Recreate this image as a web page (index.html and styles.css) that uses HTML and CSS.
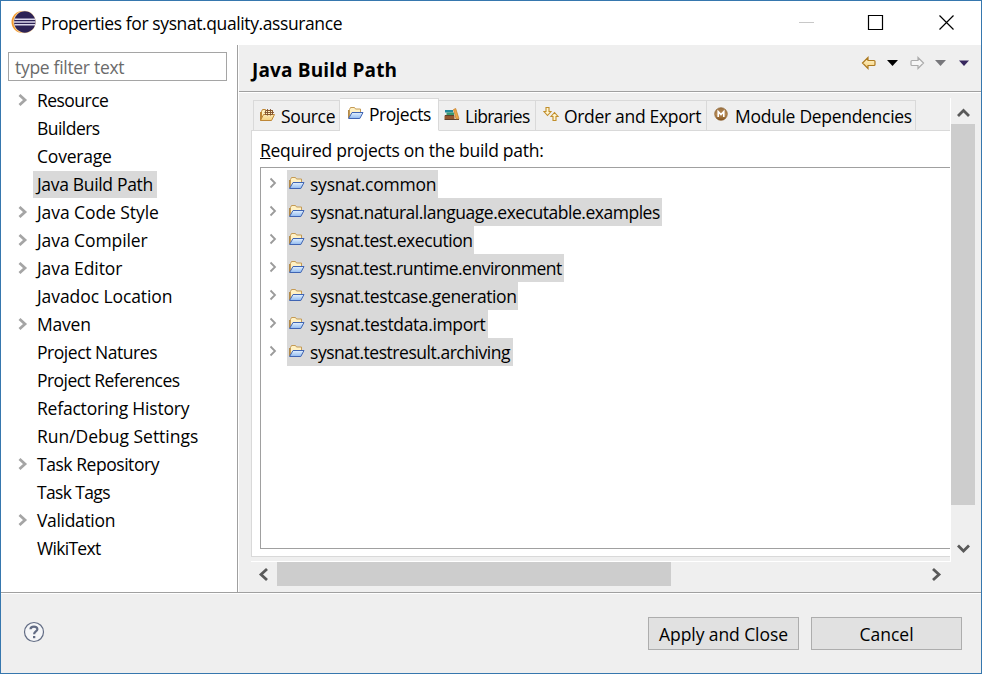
FILE: index.html
```html
<!DOCTYPE html>
<html lang="en">
<head>
<meta charset="utf-8">
<title>Properties for sysnat.quality.assurance</title>
<link rel="stylesheet" href="styles.css">
</head>
<body>
<svg width="0" height="0" class="defs" aria-hidden="true">
  <defs>
    <linearGradient id="gy" x1="0" y1="0" x2="0" y2="1"><stop offset="0" stop-color="#fff6d0"/><stop offset="1" stop-color="#f5cf7c"/></linearGradient>
    <linearGradient id="gb" x1="0" y1="0" x2="0" y2="1"><stop offset="0" stop-color="#e4f2ff"/><stop offset="1" stop-color="#8fb9ef"/></linearGradient>
    <linearGradient id="gm" x1="0" y1="0" x2="0" y2="1"><stop offset="0" stop-color="#9b7243"/><stop offset=".55" stop-color="#b98b55"/><stop offset="1" stop-color="#80501b"/></linearGradient>
    <symbol id="folder" viewBox="0 0 17 14"><path d="M2.500 11.500V3.500l1-2h4l1 1.500h5v3" fill="#fff1c4" stroke="#c49a55"/><path d="M1.500 4v8" stroke="#b28a4b"/><path d="M1.600 12.500 5 6.500h11l-3.200 6z" fill="url(#gb)" stroke="#3f64b3"/></symbol>
    <symbol id="chev" viewBox="0 0 10 14"><path d="M1.500 2 7 7l-5.500 5" fill="none" stroke="currentColor" stroke-width="2.800"/></symbol>
    <symbol id="thin" viewBox="0 0 8 12"><path d="M1.500 1.500 6 6l-4.500 4.500" fill="none" stroke="#9b9b9b" stroke-width="1.800"/></symbol>
    <symbol id="arrow" viewBox="0 0 16 14"><path d="M1.500 7 7 1.500v3h6q1 0 1 1v3q0 1-1 1H7v3z" stroke-width="1.200"/></symbol>
  </defs>
</svg>
<div class="window">
  <header class="titlebar">
    <svg class="logo" viewBox="0 0 25 24"><circle cx="11.500" cy="12" r="11" fill="#f39a2e"/><circle cx="13.500" cy="12" r="11.200" fill="#f8d7a5"/><circle cx="13.800" cy="12" r="10.700" fill="#2d2255"/><path d="M3.500 9.300h20.700M3 12h21.500M3.500 14.700h20.700" stroke="#ddd9ec" stroke-width="1.400"/></svg>
    <h1>Properties for sysnat.quality.assurance</h1>
    <svg class="controls" viewBox="0 0 160 20" width="160" height="20"><path d="M0 10.500h15" stroke="#c8c8c8"/><path d="M69.500 3.500h14v14h-14z" fill="none" stroke="#000" stroke-width="1.200"/><path d="m140.500 3.500 14 14m0-14-14 14" stroke="#000" stroke-width="1.200"/></svg>
  </header>
  <div class="body">
    <nav class="sidebar">
      <div class="filter"><span>type filter text</span></div>
      <ul class="nav">
        <li class="s4"><svg class="chev"><use href="#chev"/></svg><span>Resource</span></li>
        <li class="s4"><span>Builders</span></li>
        <li><span>Coverage</span></li>
        <li class="s3"><span class="selected">Java Build Path</span></li>
        <li class="s0"><svg class="chev"><use href="#chev"/></svg><span>Java Code Style</span></li>
        <li class="s0"><svg class="chev"><use href="#chev"/></svg><span>Java Compiler</span></li>
        <li class="s0"><svg class="chev"><use href="#chev"/></svg><span>Java Editor</span></li>
        <li class="s0"><span>Javadoc Location</span></li>
        <li><svg class="chev"><use href="#chev"/></svg><span>Maven</span></li>
        <li class="s35"><span>Project Natures</span></li>
        <li class="s4"><span>Project References</span></li>
        <li><span>Refactoring History</span></li>
        <li class="s00"><span>Run/Debug Settings</span></li>
        <li class="s35"><svg class="chev"><use href="#chev"/></svg><span>Task Repository</span></li>
        <li class="s5"><span>Task Tags</span></li>
        <li class="s3"><svg class="chev"><use href="#chev"/></svg><span>Validation</span></li>
        <li class="s6"><span>WikiText</span></li>
      </ul>
    </nav>
    <main class="main">
      <div class="heading">
        <h2>Java Build Path</h2>
        <svg width="112" height="14" viewBox="0 0 112 14"><use href="#arrow" width="16" height="14" fill="url(#gy)" stroke="#ad7a20"/><path d="M26 4h11l-5.500 6z" fill="#000"/><use href="#arrow" width="16" height="14" transform="translate(64 0) scale(-1 1)" fill="#f6f6f6" stroke="#ababab"/><path d="M74 4h11l-5.500 6z" fill="#77777b"/><path d="M98 4.500h10l-5 5.500z" fill="#37285e"/></svg>
      </div>
      <div class="scroller">
        <div class="view">
          <div class="tabs">
            <div class="tab t1"><svg width="17" height="15" viewBox="0 0 17 15"><path d="M2.500 12V4.500l1-2h3l1 1h6v3" fill="#fff0bd" stroke="#be8737"/><path d="M1.500 5v8.500L4.500 7.500h11L12.500 13.500h-11" fill="url(#gy)" stroke="#be8737"/><path d="M6.500 3.500h7v4h-7zM8.500 2v6.500m3-6.500v6.500M5.500 5.500h9.500" fill="none" stroke="#80502d" stroke-width=".9"/></svg><span>Source</span></div>
            <div class="tab t2"><svg width="17" height="14"><use href="#folder"/></svg><span>Projects</span></div>
            <div class="tab t3"><svg width="16" height="14" viewBox="0 0 16 14"><path d="M1 3h8v2.500H1z" fill="#23889b"/><path d="M2.500 5.500H10V8H2.500z" fill="#3b9871"/><path d="M.5 8.500h10v3.500H.5z" fill="#95582f"/><path d="M1 8.500h9M.5 12.500h14.500" stroke="#61402b"/><path d="m9.500 2.500 2.200-1L15 11.800h-3z" fill="#eda849" stroke="#c57c25" stroke-width=".7"/></svg><span>Libraries</span></div>
            <div class="tab t4"><svg width="16" height="16" viewBox="0 0 16 16"><path d="M3 1.500h3v4h2L4.500 9.500 1 5.500h2zM10 14.500h3v-4h2l-3.500-4-3.500 4h2z" fill="#fff5d1" stroke="#c18e2b" stroke-width="1.100"/></svg><span>Order and Export</span></div>
            <div class="tab t5"><svg width="14" height="14" viewBox="0 0 14 14"><circle cx="7" cy="7" r="6.300" fill="url(#gm)" stroke="#8b622f" stroke-width=".7"/><path d="M4.200 10V4.500L7 7.500l2.800-3V10" fill="none" stroke="#fff" stroke-width="1.600"/></svg><span>Module Dependencies</span></div>
          </div>
          <div class="panel">
            <div class="label"><span><u>R</u>equired projects on the build path:</span></div>
            <ul class="tree">
              <li><svg class="thin"><use href="#thin"/></svg><div class="item p1"><svg width="17" height="14"><use href="#folder"/></svg><span>sysnat.common</span></div></li>
              <li><svg class="thin"><use href="#thin"/></svg><div class="item p2"><svg width="17" height="14"><use href="#folder"/></svg><span>sysnat.natural.language.executable.examples</span></div></li>
              <li><svg class="thin"><use href="#thin"/></svg><div class="item p3"><svg width="17" height="14"><use href="#folder"/></svg><span>sysnat.test.execution</span></div></li>
              <li><svg class="thin"><use href="#thin"/></svg><div class="item p4"><svg width="17" height="14"><use href="#folder"/></svg><span>sysnat.test.runtime.environment</span></div></li>
              <li><svg class="thin"><use href="#thin"/></svg><div class="item p5"><svg width="17" height="14"><use href="#folder"/></svg><span>sysnat.testcase.generation</span></div></li>
              <li><svg class="thin"><use href="#thin"/></svg><div class="item p6"><svg width="17" height="14"><use href="#folder"/></svg><span>sysnat.testdata.import</span></div></li>
              <li><svg class="thin"><use href="#thin"/></svg><div class="item p7"><svg width="17" height="14"><use href="#folder"/></svg><span>sysnat.testresult.archiving</span></div></li>
            </ul>
          </div>
        </div>
        <div class="vbar">
          <svg width="24" height="26" viewBox="0 0 24 26"><path d="m7 18 5.500-5.500L18 18" fill="none" stroke="#595959" stroke-width="2.800"/></svg>
          <div class="vthumb"></div>
          <svg width="24" height="26" viewBox="0 0 24 26"><path d="m7 9.500 5.500 5.500L18 9.500" fill="none" stroke="#595959" stroke-width="2.800"/></svg>
        </div>
        <div class="hbar">
          <svg width="26" height="24" viewBox="0 0 26 24"><path d="M16 7 10 12.500l6 5.500" fill="none" stroke="#595959" stroke-width="2.800"/></svg>
          <div class="hthumb"></div>
          <svg width="26" height="24" viewBox="0 0 26 24"><path d="m10 7 6 5.500-6 5.500" fill="none" stroke="#595959" stroke-width="2.800"/></svg>
        </div>
      </div>
    </main>
  </div>
  <footer class="footer">
    <svg width="22" height="22" viewBox="0 0 22 22"><circle cx="11" cy="11" r="9.500" fill="#f5f6f8" stroke="#626c84" stroke-width="1.200"/><path d="M7.500 8.200C7.500 4.800 14.400 4.700 14.400 8.200c0 2.300-3.300 2.200-3.300 5" fill="none" stroke="#626c84" stroke-width="2.200"/><path d="M10 15h2.300v2.200H10z" fill="#626c84"/></svg>
    <button class="s0"><span>Apply and Close</span></button>
    <button><span>Cancel</span></button>
  </footer>
</div>
</body>
</html>
```
FILE: styles.css
```css
* { box-sizing: border-box; }
body { margin: 0; font: 17.5px/28px "Open Sans", "Noto Sans", sans-serif; color: #000; letter-spacing: -.2px; }
ul, h1, h2 { margin: 0; padding: 0; list-style: none; }
svg { flex: none; display: block; }
span { white-space: nowrap; }
.defs { position: absolute; }
.window { width: 982px; height: 674px; border: 1px solid #3677ae; background: #efefef; display: flex; flex-direction: column; overflow: hidden; }
.titlebar { height: 44px; flex: none; background: #fff; display: flex; align-items: center; padding-left: 10px; }
.logo { width: 25px; height: 24px; margin-top: -2px; }
.titlebar h1 { font-size: 17.5px; font-weight: 400; margin-left: 5px; white-space: nowrap; letter-spacing: -.4px; }
.controls { margin-left: auto; margin-right: 22px; margin-top: -2px; }
.body { height: 547px; flex: none; display: flex; }
.sidebar { width: 237px; flex: none; background: #fff; border-right: 1px solid #a0a0a0; padding: 7px 0 0 7px; }
.filter { width: 219px; height: 29px; border: 1px solid #a5a5a5; padding: 0 6px; color: #6b6b6b; letter-spacing: -.3px; }
.nav { padding-top: 5px; }
.nav li { height: 28px; position: relative; padding-left: 25px; display: flex; align-items: center; }
.nav span { padding: 0 4px; height: 27px; line-height: 27px; }
.nav .selected { background: #d9d9d9; }
.chev { position: absolute; left: 10px; width: 10px; height: 14px; color: #a5a5a5; }

/* tracking steps */
.s00 { letter-spacing: -.02px; }
.s0 { letter-spacing: -.08px; }
.s3 { letter-spacing: -.33px; }
.s35 { letter-spacing: -.45px; }
.s4 { letter-spacing: -.54px; }
.s5 { letter-spacing: -.64px; }
.s6 { letter-spacing: -.7px; }

.main { flex: 1; min-width: 0; border-left: 1px solid #fff; }
.heading { height: 48px; border-bottom: 1px solid #fff; box-shadow: inset 0 -1px #a0a0a0; display: flex; justify-content: space-between; padding: 11px 8px 0 13px; }
.heading h2 { font-size: 19px; line-height: 29px; font-weight: 700; letter-spacing: .15px; }
.scroller { display: grid; grid-template: 464px 24px / 700px 24px; margin: 5px 0 0 12px; }
.view { overflow: hidden; border-right: 1px solid #fff; border-bottom: 1px solid #fff; }
.tabs { display: flex; align-items: flex-end; height: 33px; padding-left: 2px; position: relative; z-index: 1; }
.tab { height: 31px; border: 1px solid #d9d9d9; border-left-width: 0; display: flex; align-items: center; padding-left: 6px; gap: 4px; }
.tab svg { margin-top: -3px; }
.t1 { width: 87px; border-left-width: 1px; padding-left: 5px; gap: 5px; letter-spacing: -.35px; }
.t2 { width: 99px; height: 33px; background: #fff; border-bottom-color: #fff; padding: 0 0 1px 7px; gap: 5px; letter-spacing: -.45px; }
.t3 { width: 97px; padding-left: 5px; gap: 5px; letter-spacing: -.7px; }
.t4 { width: 171px; padding-left: 7px; gap: 5px; letter-spacing: -.32px; }
.t5 { width: 209px; padding-left: 7px; gap: 7px; letter-spacing: -.3px; }
.panel { width: 720px; height: 427px; margin-top: -1px; background: #fff; border: 1px solid #d9d9d9; padding: 5px 0 0 8px; }
.label { height: 31px; letter-spacing: -.28px; }
.tree { height: 382px; border: 1px solid #a0a0a0; padding: 2px 0; }
.tree li { height: 28px; display: flex; align-items: center; padding-left: 8px; }
.thin { width: 8px; height: 12px; margin: -2px 10px 0 0; }
.item { height: 28px; background: #d9d9d9; display: flex; align-items: center; padding: 0 0 1px 1px; gap: 5px; }
.item svg { margin-top: -1px; }
.p1 { width: 151px; letter-spacing: -.24px; }
.p2 { width: 375px; letter-spacing: -.48px; }
.p3 { width: 187px; letter-spacing: -.44px; }
.p4 { width: 277px; letter-spacing: -.49px; }
.p5 { width: 231px; letter-spacing: -.4px; }
.p6 { width: 201px; letter-spacing: -.37px; }
.p7 { width: 226px; letter-spacing: -.46px; }
.vbar, .hbar { display: flex; }
.vbar { flex-direction: column; }
.vthumb { height: 381px; background: #cdcdcd; margin-bottom: 31px; }
.hthumb { width: 394px; background: #cdcdcd; margin-right: 252px; }
.footer { flex: 1; border-top: 1px solid #a0a0a0; box-shadow: inset 0 1px #fff; display: flex; padding: 24px 19px 0 22px; gap: 12px; }
.footer > svg { margin: 4px auto 0 0; }
button { width: 151px; height: 33px; border: 1px solid #adadad; background: #e1e1e1; color: #000; font: inherit; padding: 1px 0 0; }
```
